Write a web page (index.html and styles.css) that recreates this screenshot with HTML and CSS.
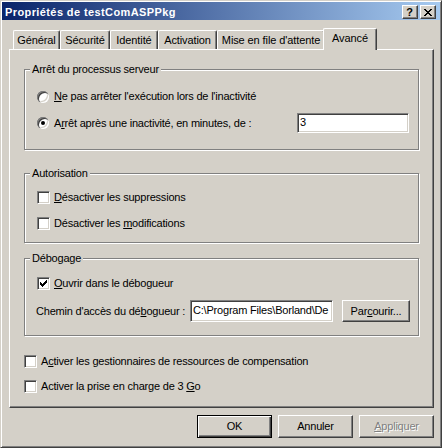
FILE: index.html
```html
<!DOCTYPE html>
<html lang="fr">
<head>
<meta charset="utf-8">
<title>Propriétés de testComASPPkg</title>
<link rel="stylesheet" href="styles.css">
</head>
<body>
<div class="window">
  <div class="titlebar">
    <span class="title">Propriétés de testComASPPkg</span>
    <div class="tb-buttons">
      <span class="tb-btn help">?</span>
      <span class="tb-btn close"><svg width="8" height="7" viewBox="0 0 8 7"><path fill="#000" d="M0 0h2v1h-2zM6 0h2v1h-2zM1 1h2v1h-2zM5 1h2v1h-2zM2 2h4v1h-4zM3 3h2v1h-2zM2 4h4v1h-4zM1 5h2v1h-2zM5 5h2v1h-2zM0 6h2v1h-2zM6 6h2v1h-2z"/></svg></span>
    </div>
  </div>

  <div class="tabs">
    <div class="tab t-general">Général</div>
    <div class="tab t-securite">Sécurité</div>
    <div class="tab t-identite">Identité</div>
    <div class="tab t-activation">Activation</div>
    <div class="tab t-file">Mise en file d'attente</div>
    <div class="tab active t-avance">Avancé</div>
  </div>

  <div class="panel">
    <fieldset class="group g-arret">
      <legend>Arrêt du processus serveur</legend>
      <div class="gb-body">
        <div class="row">
          <span class="radio"></span>
          <span class="lbl"><u>N</u>e pas arrêter l'exécution lors de l'inactivité</span>
        </div>
        <div class="row row-field">
          <span class="radio checked"><span class="dot"></span></span>
          <span class="lbl grow">A<u>r</u>rêt après une inactivité, en minutes, de :</span>
          <div class="field f-minutes">3</div>
        </div>
      </div>
    </fieldset>

    <fieldset class="group g-auth">
      <legend>Autorisation</legend>
      <div class="gb-body">
        <div class="row">
          <span class="check"></span>
          <span class="lbl"><u>D</u>ésactiver les suppressions</span>
        </div>
        <div class="row">
          <span class="check"></span>
          <span class="lbl">Désactiver les <u>m</u>odifications</span>
        </div>
      </div>
    </fieldset>

    <fieldset class="group g-debug">
      <legend>Débogage</legend>
      <div class="gb-body">
        <div class="row">
          <span class="check"><svg width="7" height="7" viewBox="0 0 7 7"><path fill="#000" d="M0 2h1v3h-1zM1 3h1v3h-1zM2 4h1v3h-1zM3 3h1v3h-1zM4 2h1v3h-1zM5 1h1v3h-1zM6 0h1v3h-1z"/></svg></span>
          <span class="lbl"><u>O</u>uvrir dans le débogueur</span>
        </div>
        <div class="row row-path">
          <span class="lbl grow path-lbl">Chemin d'accès du dé<u>b</u>ogueur :</span>
          <div class="field f-path">C:\Program Files\Borland\De</div>
          <span class="btn btn-browse">Par<u>c</u>ourir...</span>
        </div>
      </div>
    </fieldset>

    <div class="row loose first-loose">
      <span class="check"></span>
      <span class="lbl">A<u>c</u>tiver les gestionnaires de ressources de compensation</span>
    </div>
    <div class="row loose second-loose">
      <span class="check"></span>
      <span class="lbl">Activer la prise en charge de 3 <u>G</u>o</span>
    </div>
  </div>

  <div class="buttons">
    <span class="btn btn-dlg default">OK</span>
    <span class="btn btn-dlg">Annuler</span>
    <span class="btn btn-dlg disabled"><u>A</u>ppliquer</span>
  </div>
</div>
</body>
</html>
```

FILE: styles.css
```css
* { box-sizing: border-box; }
html, body { margin: 0; padding: 0; }
body {
  background: #D4D0C8;
  font-family: "Liberation Sans", Arial, sans-serif;
  font-size: 11px;
  line-height: 13px;
  letter-spacing: -0.2px;
  color: #000;
}

.window {
  width: 442px;
  height: 448px;
  border: 1px solid;
  border-color: #D4D0C8 #404040 #404040 #D4D0C8;
  box-shadow: inset 1px 1px #fff, inset -1px -1px #808080;
  padding: 1px;
  display: flex;
  flex-direction: column;
}

/* Title bar */
.titlebar {
  height: 18px;
  flex: none;
  display: flex;
  align-items: flex-start;
  padding: 2px 3px 0 3px;
  background: linear-gradient(to right, #0A246A, #A6CAF0);
}
.title {
  color: #fff;
  font-weight: bold;
  font-size: 11px;
  line-height: 16px;
  letter-spacing: 0.4px;
  white-space: nowrap;
}
.tb-buttons {
  margin-left: auto;
  margin-top: 1px;
  display: flex;
  gap: 2px;
  margin-right: 1px;
}
.tb-btn {
  width: 16px;
  height: 14px;
  background: #D4D0C8;
  border: 1px solid;
  border-color: #fff #404040 #404040 #fff;
  box-shadow: inset -1px -1px #808080;
  display: flex;
  align-items: center;
  justify-content: center;
}
.help {
  font-weight: bold;
  font-size: 11px;
  line-height: 12px;
  letter-spacing: 0;
  padding-right: 1px;
}
.close svg { display: block; margin-right: 1px; }

/* Tabs */
.tabs {
  flex: none;
  display: flex;
  align-items: flex-end;
  height: 21px;
  margin-top: 8px;
  padding-left: 11px;
  position: relative;
  z-index: 1;
}
.tab {
  height: 19px;
  border: 1px solid;
  border-bottom: 0;
  border-color: #fff #404040 #fff #fff;
  box-shadow: inset -1px 0 #808080;
  border-radius: 2px 2px 0 0;
  text-align: center;
  padding-top: 3px;
  white-space: nowrap;
  letter-spacing: -0.1px;
}
.t-general { width: 47px; }
.t-securite { width: 50px; }
.t-identite { width: 48px; }
.t-activation { width: 59px; }
.t-file { width: 108px; }
.tab.active {
  width: 54px;
  height: 22px;
  margin: 0 -2px -1px -2px;
  background: #D4D0C8;
  position: relative;
  z-index: 2;
}

/* Panel */
.panel {
  flex: none;
  margin-left: 7px;
  width: 425px;
  height: 359px;
  border: 1px solid;
  border-color: #fff #404040 #404040 #fff;
  box-shadow: inset -1px -1px #808080;
  padding: 13px 14px 0 14px;
}

.group {
  margin: 0;
  padding: 0;
  min-width: 0;
  border: 1px solid #808080;
  box-shadow: 1px 1px 0 #fff, inset 1px 1px 0 #fff;
}
.group legend {
  margin-left: 5px;
  padding: 0 2px;
  background: #D4D0C8;
  line-height: 13px;
}
.gb-body { padding: 0 9px 0 12px; }

.g-arret .gb-body { padding-top: 14px; padding-bottom: 16px; }
.g-arret .row-field { margin-top: 10px; }

.g-auth { margin-top: 17px; }
.g-auth .gb-body { padding-top: 11px; padding-bottom: 12px; }
.g-auth .row + .row { margin-top: 13px; }

.g-debug { margin-top: 9px; }
.g-debug .gb-body { padding-top: 12px; padding-bottom: 13px; }
.g-debug .row-path { margin-top: 10px; }

.row {
  display: flex;
  align-items: center;
  height: 13px;
}
.row-field { height: 20px; }
.row-path { height: 22px; }
.lbl { white-space: nowrap; margin-left: 4px; }
.grow { flex: 1; }
.path-lbl { margin-left: -1px; }

.first-loose { margin-top: 19px; }
.second-loose { margin-top: 12px; }

/* Controls */
.check {
  flex: none;
  width: 13px;
  height: 13px;
  background: #fff;
  border: 1px solid;
  border-color: #808080 #fff #fff #808080;
  box-shadow: inset 1px 1px #404040, inset -1px -1px #D4D0C8;
  display: flex;
  align-items: center;
  justify-content: center;
}
.check svg { display: block; }

.radio {
  flex: none;
  width: 12px;
  height: 12px;
  border-radius: 50%;
  background: #fff;
  box-shadow: inset 1px 1px #808080, inset 2px 2px #404040, inset -1px -1px #fff, inset -2px -2px #D4D0C8;
  display: flex;
  align-items: center;
  justify-content: center;
  margin-right: 1px;
}
.radio .dot {
  width: 4px;
  height: 4px;
  border-radius: 50%;
  background: #000;
}

.field {
  flex: none;
  background: #fff;
  border: 1px solid;
  border-color: #808080 #fff #fff #808080;
  box-shadow: inset 1px 1px #404040, inset -1px -1px #D4D0C8;
  padding: 2px 2px 0 2px;
  white-space: nowrap;
  overflow: hidden;
}
.f-minutes { width: 112px; height: 20px; }
.f-path { width: 143px; height: 22px; padding-top: 3px; }

.btn {
  flex: none;
  background: #D4D0C8;
  border: 1px solid;
  border-color: #fff #404040 #404040 #fff;
  box-shadow: inset -1px -1px #808080;
  display: flex;
  align-items: center;
  justify-content: center;
  white-space: nowrap;
}
.btn-browse {
  width: 68px;
  height: 22px;
  margin-left: 9px;
  margin-right: -1px;
}

/* Dialog buttons */
.buttons {
  flex: none;
  display: flex;
  justify-content: flex-end;
  gap: 6px;
  margin-top: 7px;
  padding-right: 6px;
}
.btn-dlg { width: 75px; height: 23px; }
.btn-dlg.default {
  border-color: #000;
  box-shadow: inset 1px 1px #fff, inset -1px -1px #404040, inset -2px -2px #808080;
}
.btn-dlg.disabled {
  color: #808080;
  text-shadow: 1px 1px 0 #fff;
}
```
